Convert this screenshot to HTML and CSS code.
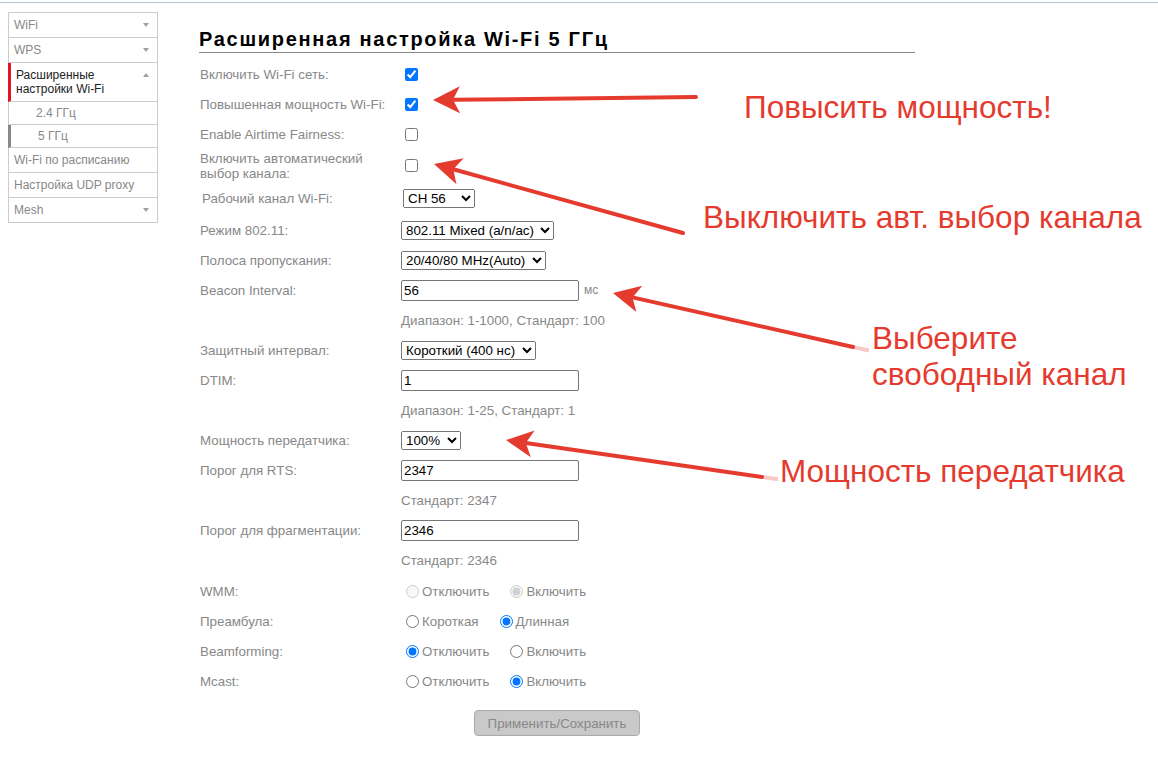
FILE: index.html
```html
<!DOCTYPE html>
<html lang="ru">
<head>
    <meta charset="UTF-8">
    <meta name="viewport" content="width=device-width, initial-scale=1.0">
    <title>Расширенная настройка Wi-Fi 5 ГГц</title>
    <link rel="stylesheet" href="styles.css">
</head>
<body>
    <div class="topline"></div>

    <div class="page">
        <ul class="menu">
            <li class="menu-item"><span>WiFi</span><i class="caret"></i></li>
            <li class="menu-item"><span>WPS</span><i class="caret"></i></li>
            <li class="menu-item open"><span>Расширенные<br>настройки Wi-Fi</span><i class="caret up"></i></li>
            <li class="menu-item sub"><span>2.4 ГГц</span></li>
            <li class="menu-item sub current"><span>5 ГГц</span></li>
            <li class="menu-item"><span>Wi-Fi по расписанию</span></li>
            <li class="menu-item"><span>Настройка UDP proxy</span></li>
            <li class="menu-item"><span>Mesh</span><i class="caret"></i></li>
        </ul>

        <main class="content">
            <h1 class="title">Расширенная настройка Wi-Fi 5 ГГц</h1>

            <form class="settings">
                <div class="row">
                    <label class="lbl">Включить Wi-Fi сеть:</label>
                    <div class="ctl"><input type="checkbox" class="chk" checked></div>
                </div>
                <div class="row">
                    <label class="lbl">Повышенная мощность Wi-Fi:</label>
                    <div class="ctl"><input type="checkbox" class="chk" checked></div>
                </div>
                <div class="row">
                    <label class="lbl">Enable Airtime Fairness:</label>
                    <div class="ctl"><input type="checkbox" class="chk"></div>
                </div>
                <div class="row tall">
                    <label class="lbl two">Включить автоматический<br>выбор канала:</label>
                    <div class="ctl"><input type="checkbox" class="chk"></div>
                </div>
                <div class="row tall shifted">
                    <label class="lbl">Рабочий канал Wi-Fi:</label>
                    <div class="ctl">
                        <select class="sel sel-ch">
                            <option>CH 36</option>
                            <option>CH 40</option>
                            <option>CH 44</option>
                            <option>CH 48</option>
                            <option>CH 52</option>
                            <option selected>CH 56</option>
                            <option>CH 60</option>
                            <option>CH 64</option>
                            <option>CH 149</option>
                            <option>CH 165</option>
                        </select>
                    </div>
                </div>
                <div class="row">
                    <label class="lbl">Режим 802.11:</label>
                    <div class="ctl">
                        <select class="sel sel-mode">
                            <option>802.11 Mixed (a/n/ac)</option>
                            <option>802.11 a</option>
                            <option>802.11 n</option>
                        </select>
                    </div>
                </div>
                <div class="row">
                    <label class="lbl">Полоса пропускания:</label>
                    <div class="ctl">
                        <select class="sel sel-band">
                            <option>20/40/80 MHz(Auto)</option>
                            <option>20 MHz</option>
                            <option>40 MHz</option>
                        </select>
                    </div>
                </div>
                <div class="row">
                    <label class="lbl">Beacon Interval:</label>
                    <div class="ctl"><input type="text" class="txt" value="56"><span class="unit">мс</span></div>
                </div>
                <div class="row">
                    <span class="lbl"></span>
                    <div class="ctl hint">Диапазон: 1-1000, Стандарт: 100</div>
                </div>
                <div class="row">
                    <label class="lbl">Защитный интервал:</label>
                    <div class="ctl">
                        <select class="sel sel-guard">
                            <option>Короткий (400 нс)</option>
                            <option>Длинный (800 нс)</option>
                        </select>
                    </div>
                </div>
                <div class="row">
                    <label class="lbl">DTIM:</label>
                    <div class="ctl"><input type="text" class="txt" value="1"></div>
                </div>
                <div class="row">
                    <span class="lbl"></span>
                    <div class="ctl hint">Диапазон: 1-25, Стандарт: 1</div>
                </div>
                <div class="row">
                    <label class="lbl">Мощность передатчика:</label>
                    <div class="ctl">
                        <select class="sel sel-power">
                            <option>100%</option>
                            <option>75%</option>
                            <option>50%</option>
                            <option>25%</option>
                        </select>
                    </div>
                </div>
                <div class="row">
                    <label class="lbl">Порог для RTS:</label>
                    <div class="ctl"><input type="text" class="txt" value="2347"></div>
                </div>
                <div class="row">
                    <span class="lbl"></span>
                    <div class="ctl hint">Стандарт: 2347</div>
                </div>
                <div class="row">
                    <label class="lbl">Порог для фрагментации:</label>
                    <div class="ctl"><input type="text" class="txt" value="2346"></div>
                </div>
                <div class="row">
                    <span class="lbl"></span>
                    <div class="ctl hint">Стандарт: 2346</div>
                </div>
                <div class="row radios">
                    <label class="lbl">WMM:</label>
                    <div class="ctl">
                        <label class="opt"><input type="radio" name="wmm" disabled>Отключить</label>
                        <label class="opt"><input type="radio" name="wmm" disabled checked>Включить</label>
                    </div>
                </div>
                <div class="row">
                    <label class="lbl">Преамбула:</label>
                    <div class="ctl">
                        <label class="opt"><input type="radio" name="preamble">Короткая</label>
                        <label class="opt"><input type="radio" name="preamble" checked>Длинная</label>
                    </div>
                </div>
                <div class="row">
                    <label class="lbl">Beamforming:</label>
                    <div class="ctl">
                        <label class="opt"><input type="radio" name="bf" checked>Отключить</label>
                        <label class="opt"><input type="radio" name="bf">Включить</label>
                    </div>
                </div>
                <div class="row">
                    <label class="lbl">Mcast:</label>
                    <div class="ctl">
                        <label class="opt"><input type="radio" name="mcast">Отключить</label>
                        <label class="opt"><input type="radio" name="mcast" checked>Включить</label>
                    </div>
                </div>
            </form>

            <div class="actions">
                <button type="button" class="btn" disabled>Применить/Сохранить</button>
            </div>
        </main>
    </div>

    <!-- пометки поверх скриншота -->
    <svg class="marks" width="1158" height="766" viewBox="0 0 1158 766">
        <defs>
            <marker id="head" markerUnits="userSpaceOnUse" markerWidth="30" markerHeight="30" viewBox="0 0 30 30" refX="7" refY="15" orient="auto">
                <path d="M27 15 L0 1.5 L7 15 L0 28.5 Z" fill="#e53b2f"/>
            </marker>
        </defs>
        <line class="arrow" x1="696" y1="97" x2="453" y2="99.8" marker-end="url(#head)"/>
        <line class="arrow" x1="683" y1="233" x2="453.3" y2="169.3" marker-end="url(#head)"/>
        <line class="arrow-fade" x1="869" y1="350.5" x2="853" y2="347"/>
        <line class="arrow" x1="853" y1="347" x2="632.5" y2="297.4" marker-end="url(#head)"/>
        <line class="arrow-fade" x1="778" y1="479.3" x2="762" y2="477"/>
        <line class="arrow" x1="762" y1="477" x2="525.8" y2="442.9" marker-end="url(#head)"/>
    </svg>

    <div class="note note-power">Повысить мощность!</div>
    <div class="note note-auto">Выключить авт. выбор канала</div>
    <div class="note note-free">Выберите<br>свободный канал</div>
    <div class="note note-tx">Мощность передатчика</div>
</body>
</html>
```

FILE: styles.css
```css
body {
    font-family: 'Liberation Sans', Arial, sans-serif;
    background-color: #fff;
    color: #888;
    margin: 0;
    padding: 0;
}

.topline {
    height: 1px;
    margin-top: 2px;
    background-color: #b3c5d3;
}

.page {
    display: flex;
    align-items: flex-start;
}

/* левое меню */
.menu {
    list-style: none;
    width: 150px;
    flex: none;
    margin: 9px 0 0 8px;
    padding: 0;
    font-size: 12px;
}

.menu-item {
    display: flex;
    align-items: center;
    justify-content: space-between;
    box-sizing: border-box;
    height: 25px;
    padding: 0 8px 0 5px;
    border: 1px solid #ccc;
    border-top: none;
    color: #888;
}

.menu-item:first-child {
    height: 26px;
    border-top: 1px solid #ccc;
}

.menu-item.open {
    height: 39px;
    align-items: flex-start;
    padding-top: 5px;
    padding-left: 5px;
    border-left: 3px solid #e3151e;
    color: #222;
    line-height: 14px;
}

.menu-item.sub {
    height: 23px;
    padding-left: 27px;
}

.menu-item.current {
    border-left: 3px solid #888;
}

.caret {
    width: 0;
    height: 0;
    border-left: 3px solid transparent;
    border-right: 3px solid transparent;
    border-top: 4px solid #a0a0a0;
}

.caret.up {
    margin-top: 5px;
    border-top: none;
    border-bottom: 4px solid #a0a0a0;
}

/* основная часть */
.content {
    width: 716px;
    margin: 24px 0 0 41px;
}

.title {
    margin: 0;
    padding-bottom: 1px;
    font-size: 20px;
    line-height: 24px;
    letter-spacing: 1.7px;
    color: #000;
    border-bottom: 1px solid #888;
}

.settings {
    margin-top: 6px;
}

.row {
    display: flex;
    align-items: center;
    height: 30px;
}

.row.tall {
    height: 33px;
}

.row.radios {
    margin-top: 1px;
}

.row.shifted {
    padding-left: 2px;
}

.lbl {
    width: 202px;
    flex: none;
    padding-left: 1px;
    box-sizing: border-box;
    font-size: 13.33px;
    color: #888;
}

.lbl.two {
    line-height: 15px;
    white-space: nowrap;
}

.ctl {
    display: flex;
    align-items: center;
    font-size: 13.33px;
}

.chk {
    margin: 0 0 0 4px;
    width: 13px;
    height: 13px;
}

.sel,
.txt {
    font-family: 'Liberation Sans', Arial, sans-serif;
    font-size: 13.33px;
    color: #000;
    margin: 0;
    box-sizing: border-box;
}

.sel {
    height: 19px;
}

.sel-ch { width: 72px; }
.sel-mode { width: 153px; }
.sel-band { width: 145px; }
.sel-guard { width: 135px; }
.sel-power { width: 60px; }

.txt {
    width: 178px;
    height: 21px;
    padding: 1px 2px;
    border: 1px solid #767676;
    border-radius: 2px;
}

.unit {
    margin-left: 5px;
    font-size: 12px;
    color: #888;
}

.hint {
    color: #888;
}

.opt {
    display: flex;
    align-items: center;
    margin-right: 16px;
    color: #888;
}

.opt input {
    margin: 0 3px 0 5px;
    width: 13px;
    height: 13px;
}

.actions {
    margin-top: 14px;
    text-align: center;
}

.btn {
    width: 166px;
    height: 26px;
    font-family: 'Liberation Sans', Arial, sans-serif;
    font-size: 13.33px;
    color: #888;
    background-color: #c9c9c9;
    border: 1px solid #aaa;
    border-radius: 4px;
}

/* красные пометки */
.marks {
    position: absolute;
    top: 0;
    left: 0;
    pointer-events: none;
}

.arrow {
    stroke: #e53b2f;
    stroke-width: 4;
    stroke-linecap: round;
}

.arrow-fade {
    stroke: #f7cac6;
    stroke-width: 4;
}

.note {
    position: absolute;
    font-size: 31.5px;
    line-height: 34px;
    color: #e53b2f;
    white-space: nowrap;
}

.note-power {
    left: 744px;
    top: 90px;
}

.note-auto {
    left: 703px;
    top: 200px;
}

.note-free {
    left: 872px;
    top: 320px;
    line-height: 36px;
}

.note-tx {
    left: 780px;
    top: 454px;
}
```
